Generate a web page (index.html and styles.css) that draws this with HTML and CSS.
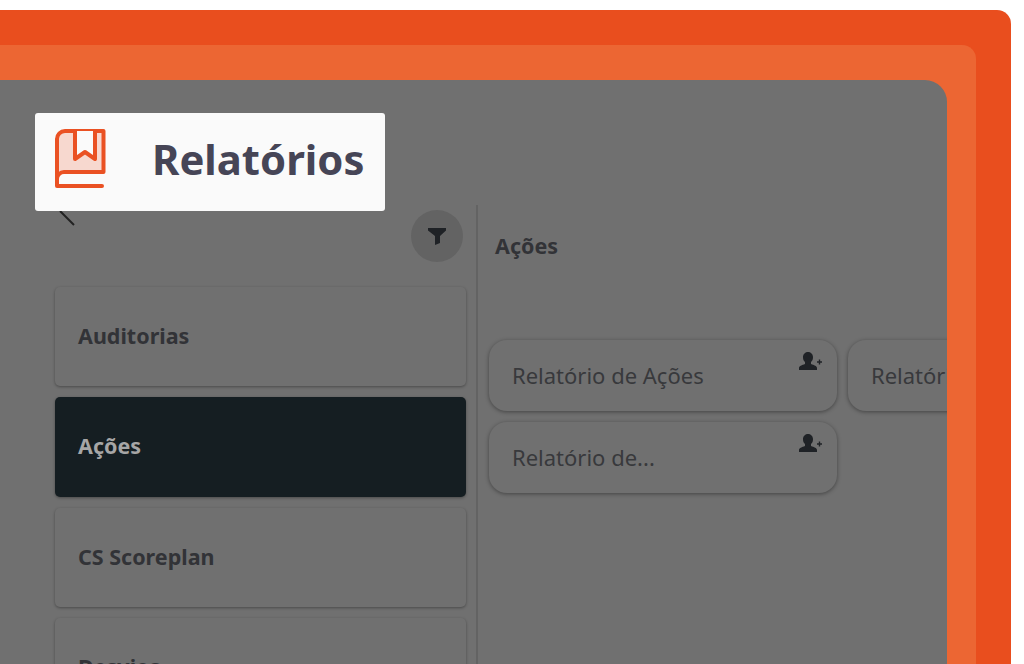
FILE: index.html
```html
<!DOCTYPE html>
<html lang="pt">
<head>
    <meta charset="UTF-8">
    <meta name="viewport" content="width=device-width, initial-scale=1.0">
    <title>Relatórios</title>
    <link rel="stylesheet" href="styles.css">
</head>
<body>
    <div class="frame-outer">
        <div class="frame-middle">
            <div class="panel">
                <!-- título em destaque, por cima do overlay -->
                <div class="highlight">
                    <svg class="book-icon" width="52" height="62" viewBox="0 0 52 62">
                        <path d="M3 46V10a8 8 0 0 1 8-8h38v43H10a7 7 0 0 0-7 1z" fill="#ea5123" opacity="0.2"/>
                        <path d="M3 50V10a8 8 0 0 1 8-8h38.500v41H10a7 7 0 0 0-7 7v7h45" fill="none" stroke="#ea5123" stroke-width="4" stroke-linecap="round" stroke-linejoin="round"/>
                        <path d="M21 2v28l10-7 10 7V2" fill="#fafafa" stroke="#ea5123" stroke-width="4" stroke-linejoin="round" stroke-linecap="round"/>
                    </svg>
                    <h1>Relatórios</h1>
                </div>

                <div class="sidebar">
                    <div class="sidebar-top">
                        <svg class="back-icon" width="20" height="20" viewBox="0 0 20 20">
                            <path d="M2 2l14 14" stroke="#222" stroke-width="2" fill="none"/>
                        </svg>
                        <button class="filter-button">
                            <svg width="18" height="17" viewBox="0 0 18 17">
                                <path d="M0 0h18v2.500l-6 5.500v7l-5 2V8L0 2.500z" fill="#1f2226"/>
                            </svg>
                        </button>
                    </div>
                    <div class="category">Auditorias</div>
                    <div class="category active">Ações</div>
                    <div class="category">CS Scoreplan</div>
                    <div class="category">Desvios</div>
                </div>

                <div class="content">
                    <h2>Ações</h2>
                    <div class="cards">
                        <div class="card">
                            <span class="card-title">Relatório de Ações</span>
                            <svg class="user-icon" width="24" height="18" viewBox="0 0 24 18">
                                <path d="M0 18v-2c0-2 3-3 6-4v-2C4.500 9 4 7 4 5c0-3 2.500-5 5-5s5 2 5 5c0 2-.5 4-2 5v2c3 1 6 2 6 4v2z" fill="#1f2226"/>
                                <path d="M18 10h5M20.500 7.500v5" stroke="#1f2226" stroke-width="1.400"/>
                            </svg>
                        </div>
                        <div class="card">
                            <span class="card-title">Relatório</span>
                        </div>
                        <div class="card">
                            <span class="card-title">Relatório de...</span>
                            <svg class="user-icon" width="24" height="18" viewBox="0 0 24 18">
                                <path d="M0 18v-2c0-2 3-3 6-4v-2C4.500 9 4 7 4 5c0-3 2.500-5 5-5s5 2 5 5c0 2-.5 4-2 5v2c3 1 6 2 6 4v2z" fill="#1f2226"/>
                                <path d="M18 10h5M20.500 7.500v5" stroke="#1f2226" stroke-width="1.400"/>
                            </svg>
                        </div>
                    </div>
                </div>
            </div>
        </div>
    </div>
</body>
</html>
```

FILE: styles.css
```css
/* página */
html, body {
    height: 100%;
}

body {
    margin: 0;
    padding: 10px 13px 0 0;
    box-sizing: border-box;
    background-color: #fff;
    font-family: "Noto Sans", "Open Sans", sans-serif;
    overflow: hidden;
}

/* molduras laranja */
.frame-outer {
    height: 100%;
    padding: 35px 35px 0 0;
    box-sizing: border-box;
    background-color: #e94e1e;
    border-top-right-radius: 14px;
}

.frame-middle {
    height: 100%;
    padding: 35px 29px 0 0;
    box-sizing: border-box;
    background-color: #ec6633;
    border-top-right-radius: 14px;
}

.panel {
    position: relative;
    display: flex;
    height: 100%;
    background-color: #707070;
    border-top-right-radius: 22px;
    overflow: hidden;
}

/* título em destaque */
.highlight {
    position: absolute;
    top: 33px;
    left: 35px;
    width: 350px;
    height: 98px;
    display: flex;
    align-items: center;
    background-color: #fafafa;
    border-radius: 3px;
    z-index: 2;
}

.book-icon {
    margin: 0 0 4px 19px;
    flex-shrink: 0;
}

.highlight h1 {
    margin: 0 0 6px 46px;
    font-size: 41.800px;
    font-weight: 700;
    line-height: 1;
    color: #464556;
    white-space: nowrap;
}

/* coluna da esquerda */
.sidebar {
    width: 476px;
    padding: 130px 10px 0 55px;
    box-sizing: border-box;
    flex-shrink: 0;
    display: flex;
    flex-direction: column;
    gap: 11px;
}

.sidebar-top {
    position: relative;
    display: flex;
    justify-content: flex-end;
    flex-shrink: 0;
    height: 66px;
    padding-right: 3px;
}

.back-icon {
    position: absolute;
    top: -1px;
    left: 3px;
}

.filter-button {
    width: 52px;
    height: 52px;
    padding: 0;
    border: none;
    border-radius: 50%;
    background-color: #636363;
    display: flex;
    align-items: center;
    justify-content: center;
}

.category {
    flex-shrink: 0;
    height: 99.250px;
    padding: 0 0 2px 23px;
    box-sizing: border-box;
    display: flex;
    align-items: center;
    font-size: 21.500px;
    font-weight: 700;
    color: #323337;
    border-radius: 5px;
    box-shadow: 0 1px 3px rgba(0, 0, 0, 0.35);
}

.category.active {
    background-color: #151e22;
    color: #a6a6a6;
}

/* coluna da direita */
.content {
    flex: 1;
    min-width: 0;
    border-left: 2px solid #636363;
    margin-top: 125px;
    padding-left: 11px;
}

.content h2 {
    margin: 0 0 0 6px;
    padding-top: 26px;
    height: 135px;
    box-sizing: border-box;
    font-size: 21.500px;
    font-weight: 700;
    color: #323337;
}

.cards {
    display: grid;
    grid-template-columns: 348px 348px;
    grid-auto-rows: 71px;
    gap: 11px;
}

.card {
    position: relative;
    display: flex;
    align-items: center;
    padding: 0 0 2px 23px;
    border-radius: 18px;
    box-shadow: 0 1px 4px rgba(0, 0, 0, 0.4);
    font-size: 22px;
    color: #38393c;
    white-space: nowrap;
    overflow: hidden;
}

.user-icon {
    position: absolute;
    top: 12px;
    right: 14px;
}
```
